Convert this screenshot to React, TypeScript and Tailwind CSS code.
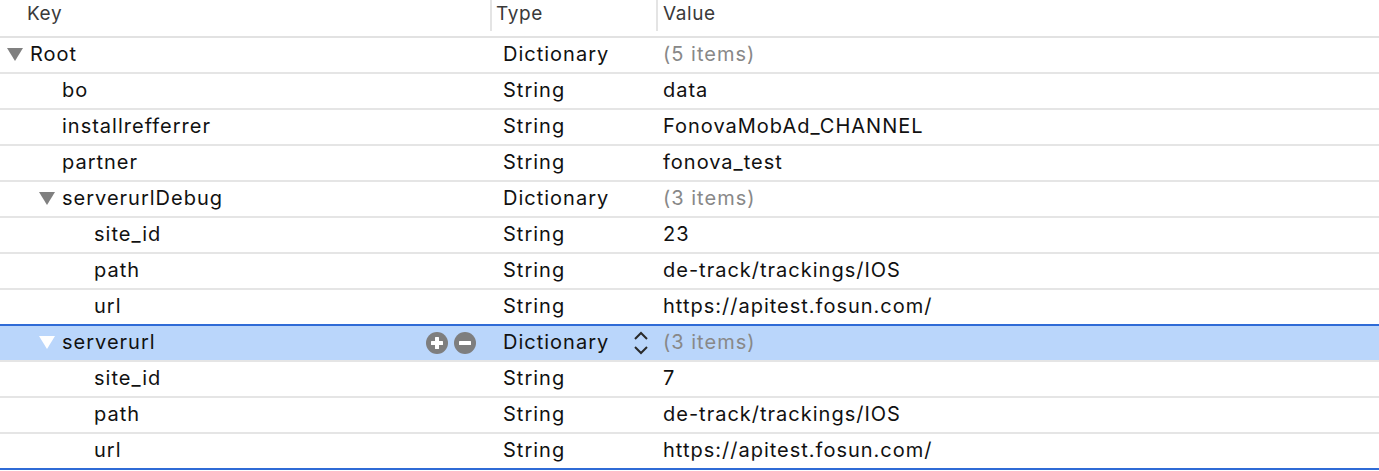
import React from 'react';

type Row = {
  name: string;
  level: number;
  type: string;
  value: string;
  open?: boolean;
  selected?: boolean;
  blueBottom?: boolean;
};

const ROWS: Row[] = [
  { name: 'Root', level: 0, type: 'Dictionary', value: '(5 items)', open: true },
  { name: 'bo', level: 1, type: 'String', value: 'data' },
  { name: 'installrefferrer', level: 1, type: 'String', value: 'FonovaMobAd_CHANNEL' },
  { name: 'partner', level: 1, type: 'String', value: 'fonova_test' },
  { name: 'serverurlDebug', level: 1, type: 'Dictionary', value: '(3 items)', open: true },
  { name: 'site_id', level: 2, type: 'String', value: '23' },
  { name: 'path', level: 2, type: 'String', value: 'de-track/trackings/IOS' },
  { name: 'url', level: 2, type: 'String', value: 'https://apitest.fosun.com/', blueBottom: true },
  { name: 'serverurl', level: 1, type: 'Dictionary', value: '(3 items)', open: true, selected: true },
  { name: 'site_id', level: 2, type: 'String', value: '7' },
  { name: 'path', level: 2, type: 'String', value: 'de-track/trackings/IOS' },
  { name: 'url', level: 2, type: 'String', value: 'https://apitest.fosun.com/', blueBottom: true },
];

const INDENT = ['pl-[7px]', 'pl-[39px]', 'pl-[71px]'];
const TEXT_INDENT = ['pl-[30px]', 'pl-[62px]', 'pl-[94px]'];

function Disclosure({ white }: { white?: boolean }) {
  return (
    <svg width="16" height="13" viewBox="0 0 16 13" className="mr-[7px] mt-[2px] shrink-0">
      <polygon points="0,0 16,0 8,13" fill={white ? '#ffffff' : '#808080'} />
    </svg>
  );
}

function RoundButton({ minus }: { minus?: boolean }) {
  return (
    <svg width="22" height="22" viewBox="0 0 22 22">
      <circle cx="11" cy="11" r="11" fill="#7e7e7e" />
      <rect x="5" y="9" width="12" height="4" rx="0.5" fill="#ffffff" />
      {!minus && <rect x="9" y="5" width="4" height="12" rx="0.5" fill="#ffffff" />}
    </svg>
  );
}

function Stepper() {
  return (
    <svg width="16" height="26" viewBox="0 0 16 26" className="mr-[7px] mt-[2px]">
      <polyline points="2,9 8,3 14,9" fill="none" stroke="#2a2a2a" strokeWidth="2" />
      <polyline points="2,17 8,23 14,17" fill="none" stroke="#2a2a2a" strokeWidth="2" />
    </svg>
  );
}

function PlistRow({ row }: { row: Row }) {
  const muted = row.value.startsWith('(');
  return (
    <div
      className={`flex h-[36px] border-b-2 ${row.blueBottom ? 'border-[#2f6bd6]' : 'border-[#e5e5e5]'} ${
        row.selected ? 'bg-[#bad6fb]' : 'bg-white'
      }`}
    >
      <div
        className={`flex w-[490px] shrink-0 items-center pb-[3px] ${row.open ? INDENT[row.level] : TEXT_INDENT[row.level]}`}
      >
        {row.open && <Disclosure white={row.selected} />}
        <span>{row.name}</span>
        {row.selected && (
          <div className="ml-auto mr-[14px] mt-[2px] flex gap-[6px]">
            <RoundButton />
            <RoundButton minus />
          </div>
        )}
      </div>
      <div className="flex w-[166px] shrink-0 items-center pb-[3px] pl-[13px]">
        <span>{row.type}</span>
        {row.selected && (
          <div className="ml-auto">
            <Stepper />
          </div>
        )}
      </div>
      <div className={`flex flex-1 items-center pb-[3px] pl-[7px] ${muted ? 'text-[#888888]' : ''}`}>
        <span>{row.value}</span>
      </div>
    </div>
  );
}

export default function App() {
  return (
    <div
      className="h-[471px] w-[1379px] overflow-hidden bg-white text-[20px] tracking-[1px] text-[#111111]"
      style={{ fontFamily: 'Inter, "Liberation Sans", sans-serif' }}
    >
      {/* Column header */}
      <div className="flex h-[38px] border-b-2 border-[#e2e2e2] text-[19px] tracking-[0.6px] text-[#3a3a3a]">
        <div className="flex w-[490px] shrink-0 items-start pl-[27px]">Key</div>
        <div className="flex h-[31px] w-[166px] shrink-0 items-start border-l-2 border-[#e4e4e4] pl-[4px]">
          Type
        </div>
        <div className="flex h-[31px] flex-1 items-start border-l-2 border-[#e4e4e4] pl-[5px]">
          Value
        </div>
      </div>

      {ROWS.map((row, i) => (
        <PlistRow key={i} row={row} />
      ))}
    </div>
  );
}
